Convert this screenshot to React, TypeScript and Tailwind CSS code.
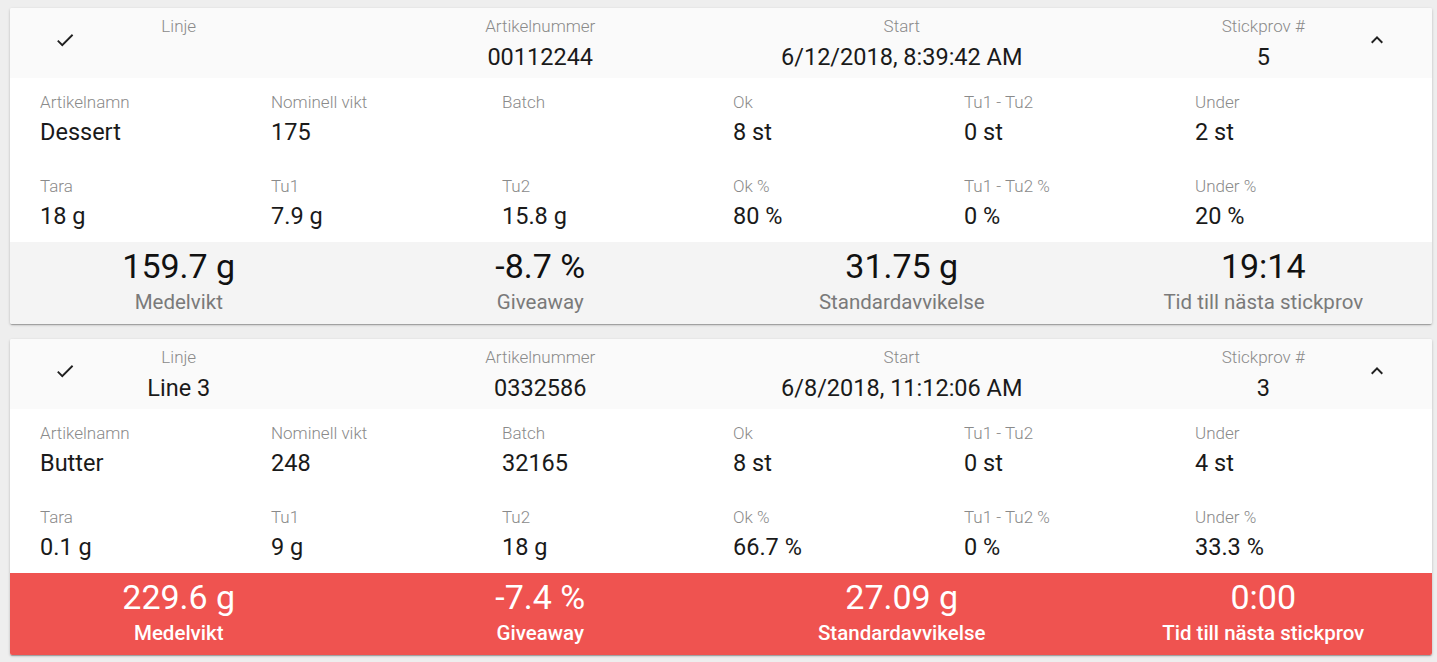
import React from 'react';

interface Field {
    label: string;
    value: string;
}

interface Stat {
    value: string;
    label: string;
}

interface SampleCard {
    header: Field[];
    details: Field[];
    stats: Stat[];
    alarm: boolean;
}

const cards: SampleCard[] = [
    {
        header: [
            { label: 'Linje', value: '' },
            { label: 'Artikelnummer', value: '00112244' },
            { label: 'Start', value: '6/12/2018, 8:39:42 AM' },
            { label: 'Stickprov #', value: '5' },
        ],
        details: [
            { label: 'Artikelnamn', value: 'Dessert' },
            { label: 'Nominell vikt', value: '175' },
            { label: 'Batch', value: '' },
            { label: 'Ok', value: '8 st' },
            { label: 'Tu1 - Tu2', value: '0 st' },
            { label: 'Under', value: '2 st' },
            { label: 'Tara', value: '18 g' },
            { label: 'Tu1', value: '7.9 g' },
            { label: 'Tu2', value: '15.8 g' },
            { label: 'Ok %', value: '80 %' },
            { label: 'Tu1 - Tu2 %', value: '0 %' },
            { label: 'Under %', value: '20 %' },
        ],
        stats: [
            { value: '159.7 g', label: 'Medelvikt' },
            { value: '-8.7 %', label: 'Giveaway' },
            { value: '31.75 g', label: 'Standardavvikelse' },
            { value: '19:14', label: 'Tid till nästa stickprov' },
        ],
        alarm: false,
    },
    {
        header: [
            { label: 'Linje', value: 'Line 3' },
            { label: 'Artikelnummer', value: '0332586' },
            { label: 'Start', value: '6/8/2018, 11:12:06 AM' },
            { label: 'Stickprov #', value: '3' },
        ],
        details: [
            { label: 'Artikelnamn', value: 'Butter' },
            { label: 'Nominell vikt', value: '248' },
            { label: 'Batch', value: '32165' },
            { label: 'Ok', value: '8 st' },
            { label: 'Tu1 - Tu2', value: '0 st' },
            { label: 'Under', value: '4 st' },
            { label: 'Tara', value: '0.1 g' },
            { label: 'Tu1', value: '9 g' },
            { label: 'Tu2', value: '18 g' },
            { label: 'Ok %', value: '66.7 %' },
            { label: 'Tu1 - Tu2 %', value: '0 %' },
            { label: 'Under %', value: '33.3 %' },
        ],
        stats: [
            { value: '229.6 g', label: 'Medelvikt' },
            { value: '-7.4 %', label: 'Giveaway' },
            { value: '27.09 g', label: 'Standardavvikelse' },
            { value: '0:00', label: 'Tid till nästa stickprov' },
        ],
        alarm: true,
    },
];

const CheckIcon = () => (
    <svg width="22" height="22" viewBox="0 0 24 24" fill="#212121">
        <path d="M9 16.17L4.83 12l-1.42 1.41L9 19 21 7l-1.41-1.41z" />
    </svg>
);

const ExpandLessIcon = () => (
    <svg width="24" height="24" viewBox="0 0 24 24" fill="#212121">
        <path d="M12 8l-6 6 1.41 1.41L12 10.83l4.59 4.58L18 14z" />
    </svg>
);

const Card: React.FC<{ card: SampleCard }> = ({ card }) => {
    return (
        <div className="ml-[10px] mr-[5px] mb-[15px] overflow-hidden rounded-[2px] bg-white shadow-[0_1px_3px_rgba(0,0,0,0.2),0_1px_1px_rgba(0,0,0,0.14),0_2px_1px_-1px_rgba(0,0,0,0.12)]">
            <div className="relative h-[70px] bg-[#fafafa]">
                <div className="-mx-[12px] grid grid-cols-4 pt-[8px]">
                    {card.header.map((field) => (
                        <div key={field.label} className="flex flex-col items-center">
                            <span className="text-[17px] leading-[20px] font-light text-[#8a8a8a]">{field.label}</span>
                            <span className="mt-[7px] h-[28px] text-[23.5px] leading-[28px] text-[#1a1a1a]">{field.value}</span>
                        </div>
                    ))}
                </div>
                <div className="absolute left-[44px] top-[21px]">
                    <CheckIcon />
                </div>
                <div className="absolute right-[43px] top-[20px]">
                    <ExpandLessIcon />
                </div>
            </div>

            <div className="grid grid-cols-[repeat(6,231px)] gap-y-[30px] px-[30px] pt-[14px] pb-[12px]">
                {card.details.map((field) => (
                    <div key={field.label} className="flex flex-col">
                        <span className="text-[17px] leading-[20px] font-light text-[#8a8a8a]">{field.label}</span>
                        <span className="mt-[6px] h-[28px] text-[23.5px] leading-[28px] text-[#1a1a1a]">{field.value}</span>
                    </div>
                ))}
            </div>

            <div className={card.alarm ? 'bg-[#ef5350]' : 'bg-[#f4f4f4]'}>
                <div className="-mx-[12px] grid grid-cols-4 pt-[4px] pb-[10px]">
                    {card.stats.map((stat) => (
                        <div key={stat.label} className="flex flex-col items-center">
                            <span className={`text-[34px] leading-[40px] ${card.alarm ? 'text-white' : 'text-[#111111]'}`}>
                                {stat.value}
                            </span>
                            <span className={`mt-[4px] text-[20.5px] leading-[24px] ${card.alarm ? 'font-medium text-white' : 'text-[#7a7a7a]'}`}>
                                {stat.label}
                            </span>
                        </div>
                    ))}
                </div>
            </div>
        </div>
    );
};

export default function App() {
    return (
        <div className="min-h-screen bg-[#eeeeee] pt-[8px] font-['Roboto',sans-serif]">
            {cards.map((card, index) => (
                <Card key={index} card={card} />
            ))}
        </div>
    );
}
